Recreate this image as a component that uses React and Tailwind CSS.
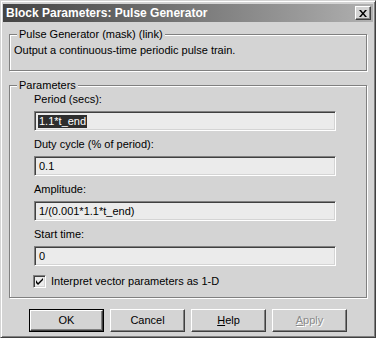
import React from "react";

const raised =
  "bg-[#d4d4d4] border border-t-white border-l-white border-r-[#404040] border-b-[#404040] shadow-[inset_-1px_-1px_#808080]";

function Field({ label, value, selected }) {
  return (
    <div className="flex flex-col">
      <div className="h-[13px] leading-[13px] mb-[5px]">{label}</div>
      <div className="w-[302px] h-[20px] bg-[#ebebeb] border border-t-[#808080] border-l-[#808080] border-r-white border-b-white shadow-[inset_1px_1px_#404040,inset_-1px_-1px_#d4d4d4] flex items-center pl-[3px]">
        {selected ? (
          <span className="bg-[#2e2e2e] text-white leading-[13px] h-[13px] px-[1px]">{value}</span>
        ) : (
          <span className="leading-[13px] pl-[1px]">{value}</span>
        )}
      </div>
    </div>
  );
}

function Button({ children, def, disabled }) {
  return (
    <div
      className={
        "w-[75px] h-[23px] flex items-center justify-center " +
        (def ? "border border-black " : "")
      }
    >
      <div className={raised + " w-full h-full flex items-center justify-center"}>
        <span
          className={
            disabled
              ? "text-[#8a8a8a] [text-shadow:1px_1px_#ffffff]"
              : "text-black"
          }
        >
          {children}
        </span>
      </div>
    </div>
  );
}

export default function App() {
  return (
    <div
      className="w-[377px] h-[339px] bg-white overflow-hidden text-[11px] text-black"
      style={{ fontFamily: '"Liberation Sans", Arial, sans-serif' }}
    >
      <div className="w-[376px] h-[338px] bg-[#d4d4d4] border border-t-[#d4d4d4] border-l-[#d4d4d4] border-r-[#404040] border-b-[#404040] shadow-[inset_1px_1px_#ffffff,inset_-1px_-1px_#808080] pt-[3px] px-[2px] flex flex-col">
        {/* Title bar */}
        <div className="h-[18px] bg-gradient-to-r from-[#444444] to-[#b0b0b0] flex items-center justify-between pl-[3px] pr-[2px]">
          <span className="text-white font-bold text-[12px] leading-[14px]">
            Block Parameters: Pulse Generator
          </span>
          <div className={raised + " w-[16px] h-[14px] flex items-center justify-center"}>
            <svg width="8" height="7" viewBox="0 0 8 7">
              <path d="M0 0h2l2 2.5L6 0h2L5 3.5 8 7H6L4 4.5 2 7H0l3-3.5z" fill="#000" />
            </svg>
          </div>
        </div>

        {/* Group 1 */}
        <div className="mt-[12px] mx-[6px] relative h-[37px] border border-[#808080] shadow-[inset_1px_1px_#ffffff,1px_1px_#ffffff]">
          <span className="absolute -top-[7px] left-[7px] px-[2px] bg-[#d4d4d4] leading-[13px]">
            Pulse Generator (mask) (link)
          </span>
          <div className="pt-[9px] pl-[4px] leading-[13px]">
            Output a continuous-time periodic pulse train.
          </div>
        </div>

        {/* Group 2 */}
        <div className="mt-[14px] mx-[6px] relative h-[213px] border border-[#808080] shadow-[inset_1px_1px_#ffffff,1px_1px_#ffffff] pt-[7px] pl-[24px]">
          <span className="absolute -top-[7px] left-[7px] px-[2px] bg-[#d4d4d4] leading-[13px]">
            Parameters
          </span>
          <div className="flex flex-col gap-[7px]">
            <Field label="Period (secs):" value="1.1*t_end" selected />
            <Field label="Duty cycle (% of period):" value="0.1" />
            <Field label="Amplitude:" value="1/(0.001*1.1*t_end)" />
            <Field label="Start time:" value="0" />
          </div>
          <div className="mt-[9px] -ml-[1px] flex items-center gap-[5px]">
            <div className="w-[13px] h-[13px] bg-[#ebebeb] border border-t-[#808080] border-l-[#808080] border-r-white border-b-white shadow-[inset_1px_1px_#404040,inset_-1px_-1px_#d4d4d4] flex items-center justify-center">
              <svg width="7" height="7" viewBox="0 0 7 7">
                <path d="M0 2v3l2 2 5-5V0L2 5z" fill="#000" />
              </svg>
            </div>
            <span className="leading-[13px]">Interpret vector parameters as 1-D</span>
          </div>
        </div>

        {/* Buttons */}
        <div className="mt-[11px] flex justify-center gap-[6px]">
          <Button def>OK</Button>
          <Button>Cancel</Button>
          <Button>
            <span className="underline">H</span>elp
          </Button>
          <Button disabled>
            <span className="underline">A</span>pply
          </Button>
        </div>
      </div>
    </div>
  );
}
